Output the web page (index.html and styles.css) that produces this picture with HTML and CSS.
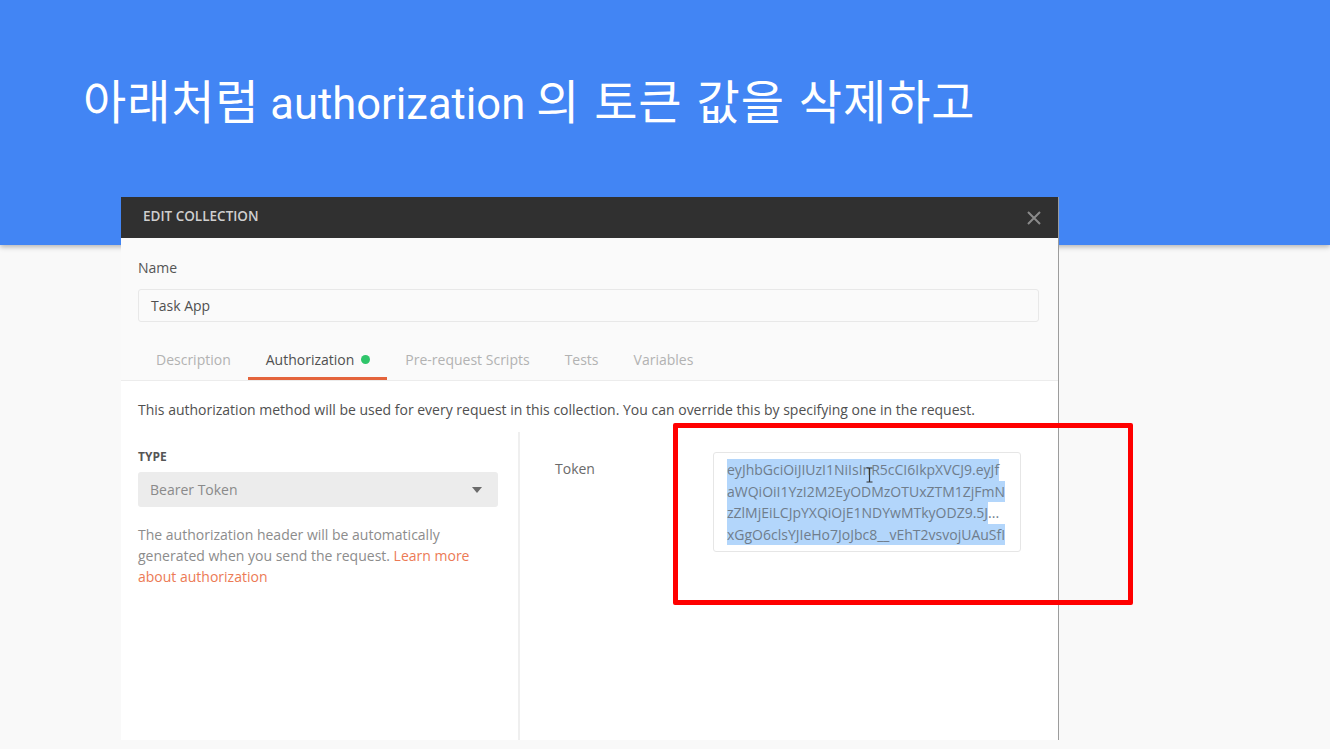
FILE: index.html
```html
<!DOCTYPE html>
<html lang="ko">
<head>
<meta charset="utf-8">
<title>Edit Collection</title>
<link rel="stylesheet" href="styles.css">
</head>
<body>
<header class="banner">
  <h1 class="slide-title"><span class="ko">아래처럼</span> authorization <span class="ko">의 토큰 값을 삭제하고</span></h1>
</header>
<main class="page"></main>

<section class="dialog">
  <div class="dlg-head">
    <span class="dlg-title">EDIT COLLECTION</span>
    <svg class="close" width="16" height="16" viewBox="0 0 16 16"><path d="M2 2 L14 14 M14 2 L2 14" stroke="#8a8a8a" stroke-width="2" fill="none"/></svg>
  </div>
  <div class="dlg-top">
    <div class="field-label">Name</div>
    <div class="text-input">Task App</div>
    <nav class="tabs">
      <span class="tab">Description</span>
      <span class="tab active">Authorization <i class="dot"></i></span>
      <span class="tab">Pre-request Scripts</span>
      <span class="tab">Tests</span>
      <span class="tab">Variables</span>
    </nav>
  </div>
  <div class="dlg-main">
    <p class="intro">This authorization method will be used for every request in this collection. You can override this by specifying one in the request.</p>
    <div class="cols">
      <div class="col-left">
        <div class="type-label">TYPE</div>
        <div class="select">
          <span>Bearer Token</span>
          <svg class="caret" width="10" height="6" viewBox="0 0 10 6"><path d="M0 0 H10 L5 6 Z" fill="#6b6b6b"/></svg>
        </div>
        <p class="help">The authorization header will be automatically generated when you send the request. <span class="link">Learn more</span> <span class="link">about authorization</span></p>
      </div>
      <div class="col-right">
        <div class="token-label">Token</div>
        <div class="token-box">
          <div class="tok-line"><span class="sel">eyJhbGciOiJIUzI1NiIsInR5cCI6IkpXVCJ9.eyJf</span></div>
          <div class="tok-line"><span class="sel">aWQiOiI1YzI2M2EyODMzOTUxZTM1ZjFmN</span></div>
          <div class="tok-line"><span class="sel">zZlMjEiLCJpYXQiOjE1NDYwMTkyODZ9.5J</span>...</div>
          <div class="tok-line"><span class="sel">xGgO6clsYJIeHo7JoJbc8__vEhT2vsvojUAuSfI</span></div>
          <svg class="ibeam" width="7" height="16" viewBox="0 0 7 16"><path d="M0.5 1 H6.5 M3.5 1 V15 M0.5 15 H6.5" stroke="#333" stroke-width="1.2" fill="none"/></svg>
        </div>
      </div>
    </div>
  </div>
</section>

<div class="highlight-box"></div>
</body>
</html>
```

FILE: styles.css
```css
* { box-sizing: border-box; }
html, body { margin: 0; padding: 0; }
body {
  width: 1330px;
  height: 749px;
  overflow: hidden;
  background: #f9f9f9;
  position: relative;
  font-family: "Open Sans", "Noto Sans", sans-serif;
}
.banner {
  height: 245px;
  background: #4285f4;
  box-shadow: 0 2px 5px rgba(0,0,0,0.28);
  padding: 69px 0 0 83px;
}
.slide-title {
  margin: 0;
  font-family: Roboto, "Noto Sans CJK KR", sans-serif;
  font-weight: 400;
  font-size: 43.5px;
  line-height: 60px;
  color: #ffffff;
  white-space: nowrap;
}
.ko {
  font-family: "Noto Sans CJK KR", sans-serif;
  font-size: 47px;
  letter-spacing: 0.9px;
}
.page { height: 504px; }

.dialog {
  position: absolute;
  left: 121px;
  top: 197px;
  width: 938px;
  height: 543px;
  background: #ffffff;
  border-right: 1px solid #9c9c9c;
  display: flex;
  flex-direction: column;
}
.dlg-head {
  height: 41px;
  background: #303030;
  display: flex;
  align-items: center;
  justify-content: space-between;
  padding: 0 16px 0 22px;
}
.dlg-title {
  color: #cfcfcf;
  font-size: 13.5px;
  font-weight: 600;
  margin-top: -3px;
}
.close { display: block; }

.dlg-top {
  background: #fafafa;
  padding: 21px 19px 0 17px;
  border-bottom: 1px solid #ececec;
}
.field-label {
  font-size: 14px;
  line-height: 18px;
  color: #555555;
}
.text-input {
  margin-top: 12px;
  height: 33px;
  border: 1px solid #e8e8e8;
  border-radius: 3px;
  background: #fafafa;
  padding: 0 12px;
  display: flex;
  align-items: center;
  font-size: 14px;
  color: #505050;
}
.tabs {
  margin-top: 16px;
  display: flex;
  height: 42px;
}
.tab {
  padding: 3px 17px 0 18px;
  display: flex;
  align-items: center;
  gap: 7px;
  font-size: 14px;
  color: #b2b2b2;
  border-bottom: 3px solid transparent;
}
.tab.active {
  color: #505050;
  border-bottom-color: #e4643c;
}
.dot {
  width: 9px;
  height: 9px;
  border-radius: 50%;
  background: #2fc56a;
  display: inline-block;
}

.dlg-main {
  flex: 1;
  display: flex;
  flex-direction: column;
  padding-left: 17px;
}
.intro {
  margin: 20px 0 0;
  font-size: 14px;
  line-height: 18px;
  color: #505050;
}
.cols {
  flex: 1;
  display: flex;
  margin-top: 13px;
}
.col-left {
  width: 382px;
  padding: 16px 20px 0 0;
  border-right: 2px solid #efefef;
}
.type-label {
  font-size: 12px;
  font-weight: 700;
  line-height: 18px;
  color: #555555;
}
.select {
  margin-top: 6px;
  height: 35px;
  background: #ececec;
  border-radius: 3px;
  display: flex;
  align-items: center;
  justify-content: space-between;
  padding: 0 16px 0 12px;
  font-size: 14px;
  color: #8a8a8a;
}
.help {
  margin: 17px 0 0;
  font-size: 14px;
  line-height: 21px;
  color: #8c8c8c;
}
.link { color: #ec7a55; }

.col-right {
  flex: 1;
  display: flex;
  padding-top: 20px;
}
.token-label {
  width: 193px;
  padding: 8px 0 0 35px;
  font-size: 14px;
  line-height: 18px;
  color: #6a6a6a;
}
.token-box {
  position: relative;
  width: 308px;
  height: 100px;
  border: 1px solid #e6e6e6;
  border-radius: 3px;
  padding: 6px 8px 0 13px;
  font-size: 14px;
  color: #6f7d8c;
}
.tok-line {
  line-height: 21.5px;
  height: 21.5px;
  white-space: nowrap;
}
.sel {
  background: #b3d6fb;
  display: inline-block;
  height: 21.5px;
}
.ibeam {
  position: absolute;
  left: 152px;
  top: 14px;
}

.highlight-box {
  position: absolute;
  left: 673px;
  top: 423px;
  width: 460px;
  height: 182px;
  border: 5px solid #ff0000;
  border-radius: 2px;
}
```
